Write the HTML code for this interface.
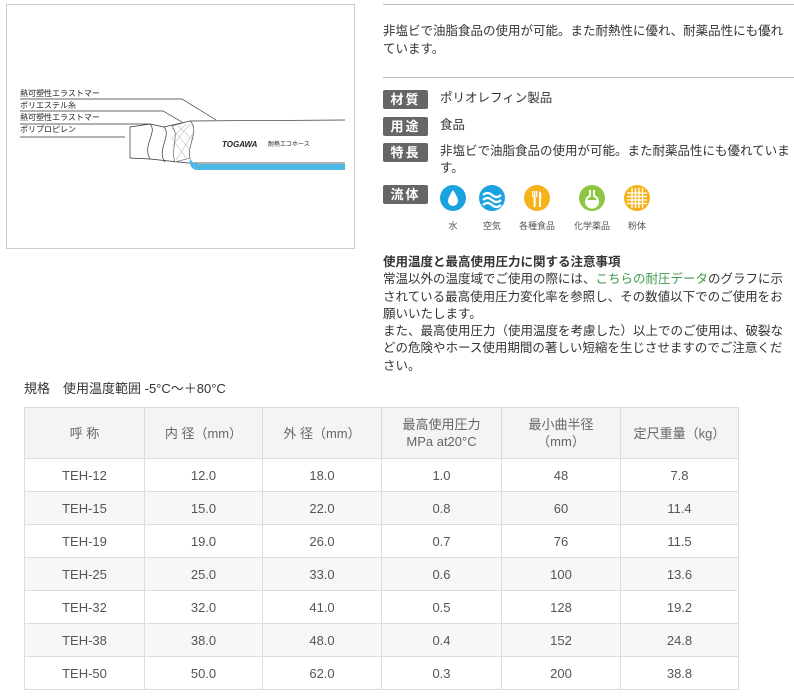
<!DOCTYPE html>
<html><head><meta charset="utf-8">
<style>
*{margin:0;padding:0;box-sizing:border-box}
body{width:794px;height:699px;background:#fff;font-family:"Liberation Sans","Noto Sans CJK JP",sans-serif;color:#333;position:relative;overflow:hidden;font-size:12.5px}
.abs{position:absolute}
.imgbox{left:6px;top:4px;width:349px;height:245px;border:1px solid #ccc}
.hr{height:1px;background:#bbb;left:383px;right:0}
.lab{position:absolute;left:383px;width:45px;height:19px;background:#666;color:#fff;font-weight:bold;font-size:13px;text-align:center;line-height:19px;letter-spacing:2px;border-radius:2px}
.val{position:absolute;left:440px;font-size:12.5px;line-height:17px;color:#333}
.ic{position:absolute;top:185px;width:26px;height:26px;border-radius:50%}
.icl{position:absolute;top:219px;font-size:9px;color:#555;text-align:center;width:60px}
table{position:absolute;left:24px;top:407px;width:715px;border-collapse:collapse;font-size:13px;color:#555}
td,th{border:1px solid #ddd;text-align:center;font-weight:normal;height:33px;line-height:17px}
th{background:#f4f4f4;height:51px;color:#666}
tr.g td{background:#f7f7f7}
</style></head><body>
<div class="abs imgbox">
<svg width="349" height="245" viewBox="6 4 349 245" style="position:absolute;left:-1px;top:-1px">
<g font-size="8" fill="#222" font-family="Liberation Sans,Noto Sans CJK JP,sans-serif">
<text x="20" y="96">熱可塑性エラストマー</text>
<text x="20" y="108">ポリエステル糸</text>
<text x="20" y="120">熱可塑性エラストマー</text>
<text x="20" y="132">ポリプロピレン</text>
</g>
<g stroke="#333" stroke-width="0.7" fill="none">
<polyline points="20,99 182,99 216,120"/>
<polyline points="20,111 163,111 182,122"/>
<polyline points="20,124 150,124"/>
<polyline points="20,137 125,137"/>
<path d="M130,127 L150,124 L164,127 L190,121 L345,120"/>
<path d="M130,127 L130,158 L150,159 L188,163 L345,163"/>
<path d="M150,124 C158,132 142,145 150,159"/>
<path d="M164,127 C172,136 156,150 165,162"/>
<path d="M190,121 C200,130 186,148 190,158"/>
</g>
<path d="M190,121 C200,130 186,148 190,158 L175,162 C170,150 180,135 172,126 Z" fill="#fff" stroke="#555" stroke-width="0.6"/>
<g stroke="#888" stroke-width="0.4"><line x1="172" y1="128" x2="190" y2="150"/><line x1="172" y1="138" x2="186" y2="158"/><line x1="178" y1="126" x2="193" y2="140"/><line x1="190" y1="124" x2="172" y2="146"/><line x1="194" y1="132" x2="176" y2="160"/><line x1="186" y1="124" x2="172" y2="138"/></g>
<path d="M190,158 C192,163 196,164 200,164 L345,164 L345,170 L196,170 C191,169 189,164 190,158 Z" fill="#4bb8e6"/>
<text x="222" y="147" font-size="8" font-weight="bold" font-style="italic" fill="#222" font-family="Liberation Sans,sans-serif">TOGAWA</text>
<text x="268" y="146" font-size="6" fill="#222" font-family="Noto Sans CJK JP,sans-serif">耐熱エコホース</text>
</svg>
</div>
<div class="abs hr" style="top:4px"></div>
<div class="abs" style="left:383px;top:22px;width:411px;line-height:18px">非塩ビで油脂食品の使用が可能。また耐熱性に優れ、耐薬品性にも優れています。</div>
<div class="abs hr" style="top:77px"></div>
<div class="lab" style="top:90px">材質</div><div class="val" style="top:90px">ポリオレフィン製品</div>
<div class="lab" style="top:117px">用途</div><div class="val" style="top:117px">食品</div>
<div class="lab" style="top:143px">特長</div><div class="val" style="top:143px;width:354px">非塩ビで油脂食品の使用が可能。また耐薬品性にも優れています。</div>
<div class="lab" style="top:185px">流体</div>
<div class="ic" style="left:440px;background:#1aa3df"><svg width="26" height="26"><path d="M13,5 C9,11 8,14 8,16 A5,5 0 0 0 18,16 C18,14 17,11 13,5Z" fill="#fff"/></svg></div>
<div class="ic" style="left:479px;background:#1aa3df"><svg width="26" height="26" fill="none" stroke="#fff" stroke-width="2.2"><path d="M4,10 Q8.5,6 13,10 T22,10"/><path d="M4,15 Q8.5,11 13,15 T22,15"/><path d="M4,20 Q8.5,16 13,20 T22,20"/></svg></div>
<div class="ic" style="left:524px;background:#f5b21b"><svg width="26" height="26" fill="#fff"><rect x="8" y="6" width="1.3" height="6"/><rect x="10" y="6" width="1.3" height="6"/><rect x="12" y="6" width="1.3" height="6"/><rect x="9.6" y="11" width="2" height="11"/><path d="M15,6 C18,7 18,13 17,14 L17,22 L15,22 Z"/></svg></div>
<div class="ic" style="left:579px;background:#8cc63f"><svg width="26" height="26" fill="none" stroke="#fff" stroke-width="2"><path d="M11,5 L11,11 A6,6 0 1 0 15,11 L15,5"/><path d="M8,16 L18,16 A5,5 0 0 1 8,16Z" fill="#fff"/></svg></div>
<div class="ic" style="left:624px;background:#f5b21b"><svg width="26" height="26" stroke="#fff" stroke-width="1.3"><path d="M3,8H23M3,11.5H23M3,15H23M3,18.5H23M8,3V23M11.5,3V23M15,3V23M18.5,3V23"/></svg></div>
<div class="icl" style="left:423px">水</div>
<div class="icl" style="left:462px">空気</div>
<div class="icl" style="left:507px">各種食品</div>
<div class="icl" style="left:562px">化学薬品</div>
<div class="icl" style="left:607px">粉体</div>
<div class="abs" style="left:383px;top:254px;width:411px;line-height:17.3px;color:#333">
<b>使用温度と最高使用圧力に関する注意事項</b><br>常温以外の温度域でご使用の際には、<span style="color:#3a9a4a">こちらの耐圧データ</span>のグラフに示されている最高使用圧力変化率を参照し、その数値以下でのご使用をお願いいたします。<br>また、最高使用圧力（使用温度を考慮した）以上でのご使用は、破裂などの危険やホース使用期間の著しい短縮を生じさせますのでご注意ください。</div>
<div class="abs" style="left:24px;top:378px;font-size:13px;color:#333">規格　使用温度範囲 -5°C～＋80°C</div>
<table>
<tr><th style="width:120px">呼 称</th><th style="width:118px">内 径（mm）</th><th style="width:119px">外 径（mm）</th><th style="width:120px">最高使用圧力<br>MPa at20°C</th><th style="width:119px">最小曲半径<br>（mm）</th><th>定尺重量（kg）</th></tr>
<tr><td>TEH-12</td><td>12.0</td><td>18.0</td><td>1.0</td><td>48</td><td>7.8</td></tr>
<tr class="g"><td>TEH-15</td><td>15.0</td><td>22.0</td><td>0.8</td><td>60</td><td>11.4</td></tr>
<tr><td>TEH-19</td><td>19.0</td><td>26.0</td><td>0.7</td><td>76</td><td>11.5</td></tr>
<tr class="g"><td>TEH-25</td><td>25.0</td><td>33.0</td><td>0.6</td><td>100</td><td>13.6</td></tr>
<tr><td>TEH-32</td><td>32.0</td><td>41.0</td><td>0.5</td><td>128</td><td>19.2</td></tr>
<tr class="g"><td>TEH-38</td><td>38.0</td><td>48.0</td><td>0.4</td><td>152</td><td>24.8</td></tr>
<tr><td>TEH-50</td><td>50.0</td><td>62.0</td><td>0.3</td><td>200</td><td>38.8</td></tr>
</table>
</body></html>
